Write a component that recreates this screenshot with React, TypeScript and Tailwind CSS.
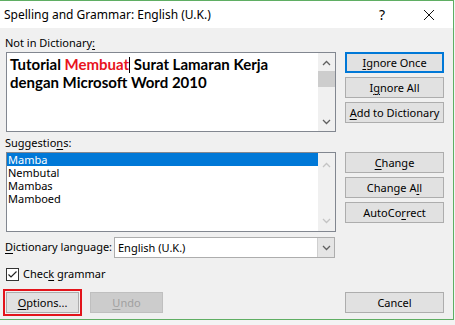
import React from "react";

const ui = { fontFamily: '"Noto Sans", "Segoe UI", sans-serif' };

function U({ children }: { children: React.ReactNode }) {
  return <span className="underline underline-offset-2">{children}</span>;
}

function Btn({
  children,
  primary,
  disabled,
  className = "",
}: {
  children: React.ReactNode;
  primary?: boolean;
  disabled?: boolean;
  className?: string;
}) {
  const base = "flex items-center justify-center h-[21px] text-[11px] leading-none whitespace-nowrap";
  const look = disabled
    ? "bg-[#cccccc] border border-[#bfbfbf] text-[#a0a0a0]"
    : primary
    ? "bg-[#e1e1e1] border-2 border-[#0078d7] text-black"
    : "bg-[#e1e1e1] border border-[#adadad] text-black";
  return <div className={`${base} ${look} ${className}`}>{children}</div>;
}

function ScrollArrow({ up, color }: { up?: boolean; color: string }) {
  return (
    <svg width="9" height="6" viewBox="0 0 9 6" className="mx-auto">
      <path
        d={up ? "M1 5 L4.5 1.5 L8 5" : "M1 1 L4.5 4.5 L8 1"}
        fill="none"
        stroke={color}
        strokeWidth="1.3"
      />
    </svg>
  );
}

export default function App() {
  return (
    <div className="w-[455px] h-[325px] bg-[#f4f4f4] overflow-hidden" style={ui}>
      <div className="w-[454px] h-[320px] border-t border-r border-b border-[#5fae63] bg-[#f0f0f0] flex flex-col whitespace-nowrap">
        {/* Title bar */}
        <div className="h-[27px] shrink-0 bg-white flex items-center pl-[4px] text-[12px] text-black">
          <span className="flex-1">Spelling and Grammar: English (U.K.)</span>
          <span className="w-[14px] text-[14px] mr-[30px]">?</span>
          <svg width="12" height="12" viewBox="0 0 12 12" className="mr-[18px]">
            <path d="M1 1 L11 11 M11 1 L1 11" stroke="#111" strokeWidth="1" />
          </svg>
        </div>

        {/* Body */}
        <div className="flex pl-[6px]">
          {/* Left column */}
          <div className="w-[330px] flex flex-col">
            <div className="mt-[7px] h-[16px] text-[11px] leading-[16px] -ml-[1px]">
              Not in Dictionary<U>:</U>
            </div>
            <div className="mt-[1px] h-[80px] border border-[#828790] bg-white flex">
              <div
                className="flex-1 pl-[3px] pt-[2px] text-[15px] leading-[18px] font-bold text-black"
                style={{ fontFamily: 'Lato, "Noto Sans", sans-serif' }}
              >
                Tutorial <span className="text-[#e8141e]">Membuat</span>
                <span className="inline-block w-[1px] h-[16px] bg-black align-[-3px]" />{" "}
                Surat Lamaran Kerja
                <br />
                dengan Microsoft Word 2010
              </div>
              <div className="w-[17px] bg-[#f0f0f0] flex flex-col pt-[7px] pb-[6px]">
                <ScrollArrow up color="#606060" />
                <div className="mt-[5px] h-[16px] bg-[#cdcdcd]" />
                <div className="flex-1" />
                <ScrollArrow color="#606060" />
              </div>
            </div>

            <div className="mt-[3px] h-[16px] text-[11px] leading-[16px] -ml-[1px]">
              Suggestio<U>n</U>s:
            </div>
            <div className="mt-[1px] h-[80px] border border-[#828790] bg-white flex">
              <div className="flex-1 text-[11px] leading-[13px] text-black">
                <div className="bg-[#0078d7] text-white pl-[1px]">Mamba</div>
                <div className="pl-[1px]">Nembutal</div>
                <div className="pl-[1px]">Mambas</div>
                <div className="pl-[1px]">Mamboed</div>
              </div>
              <div className="w-[17px] bg-[#f0f0f0] flex flex-col pt-[9px] pb-[7px]">
                <ScrollArrow up color="#c4c4c4" />
                <div className="flex-1" />
                <ScrollArrow color="#c4c4c4" />
              </div>
            </div>

            <div className="mt-[5px] flex items-center">
              <div className="w-[109px] text-[11px] -ml-[1px]">
                <U>D</U>ictionary language:
              </div>
              <div className="w-[221px] h-[21px] border border-[#adadad] bg-white flex">
                <div className="flex-1 pl-[3px] text-[11px] leading-[19px]">English (U.K.)</div>
                <div className="w-[17px] bg-[#e5e5e5] border-l border-[#cfcfcf] flex items-center">
                  <ScrollArrow color="#606060" />
                </div>
              </div>
            </div>
          </div>

          {/* Right column */}
          <div className="ml-[9px] w-[99px] flex flex-col pt-[24px]">
            <Btn primary>
              <U>I</U>gnore Once
            </Btn>
            <Btn className="mt-[4px]">
              I<U>g</U>nore All
            </Btn>
            <Btn className="mt-[4px]">
              <U>A</U>dd to Dictionary
            </Btn>
            <Btn className="mt-[29px]">
              <U>C</U>hange
            </Btn>
            <Btn className="mt-[4px]">
              Change A<U>l</U>l
            </Btn>
            <Btn className="mt-[4px]">
              AutoCo<U>r</U>rect
            </Btn>
          </div>
        </div>

        {/* Check grammar */}
        <div className="mt-[8px] pl-[6px] flex items-center text-[11px]">
          <div className="w-[13px] h-[13px] border border-[#333] bg-white flex items-center justify-center">
            <svg width="11" height="11" viewBox="0 0 11 11">
              <path d="M1.5 5.5 L4 8 L9.5 2.5" fill="none" stroke="#222" strokeWidth="1.2" />
            </svg>
          </div>
          <span className="ml-[4px]">
            Chec<U>k</U> grammar
          </span>
        </div>

        {/* Bottom buttons */}
        <div className="mt-[6px] flex items-center pl-[3px]">
          <div className="border-[2px] border-[#e3141b] p-[1px]">
            <Btn className="w-[73px]">
              <U>O</U>ptions...
            </Btn>
          </div>
          <Btn disabled className="ml-[8px] w-[73px]">
            <U>U</U>ndo
          </Btn>
          <div className="flex-1" />
          <Btn className="w-[99px] mr-[9px]">Cancel</Btn>
        </div>
      </div>
    </div>
  );
}
